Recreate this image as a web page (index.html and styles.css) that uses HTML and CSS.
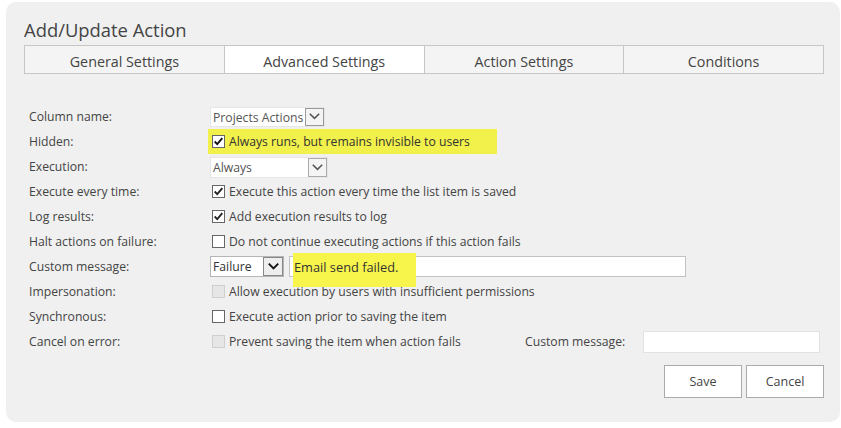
FILE: index.html
```html
<!DOCTYPE html>
<html>
<head>
<meta charset="utf-8">
<link rel="stylesheet" href="styles.css">
</head>
<body>
<div class="panel">
  <h1 class="title">Add/Update Action</h1>
  <div class="tabs">
    <div class="tab">General Settings</div>
    <div class="tab active">Advanced Settings</div>
    <div class="tab">Action Settings</div>
    <div class="tab">Conditions</div>
  </div>
  <div class="form">
    <div class="label">Column name:</div>
    <div class="ctrl">
      <span class="select sel-col"><span class="sel-text">Projects Actions</span><span class="arrow"><svg viewBox="0 0 18 18" width="17" height="17"><path d="M4 6 L9 11 L14 6" fill="none" stroke="#555" stroke-width="1.6"/></svg></span></span>
    </div>

    <div class="label">Hidden:</div>
    <div class="ctrl">
      <span class="hl hl-hidden"><span class="cb checked"><svg viewBox="0 0 13 13" width="11" height="11"><path d="M2 6.5 L5 9.5 L11 2.5" fill="none" stroke="#111" stroke-width="2.2"/></svg></span><span class="dark">Always runs, but remains invisible to users</span></span>
    </div>

    <div class="label">Execution:</div>
    <div class="ctrl">
      <span class="select sel-exec"><span class="sel-text">Always</span><span class="arrow"><svg viewBox="0 0 18 18" width="17" height="17"><path d="M4 6 L9 11 L14 6" fill="none" stroke="#555" stroke-width="1.6"/></svg></span></span>
    </div>

    <div class="label">Execute every time:</div>
    <div class="ctrl"><span class="cb checked"><svg viewBox="0 0 13 13" width="11" height="11"><path d="M2 6.5 L5 9.5 L11 2.5" fill="none" stroke="#222" stroke-width="2.2"/></svg></span>Execute this action every time the list item is saved</div>

    <div class="label">Log results:</div>
    <div class="ctrl"><span class="cb checked"><svg viewBox="0 0 13 13" width="11" height="11"><path d="M2 6.5 L5 9.5 L11 2.5" fill="none" stroke="#222" stroke-width="2.2"/></svg></span>Add execution results to log</div>

    <div class="label">Halt actions on failure:</div>
    <div class="ctrl"><span class="cb"></span>Do not continue executing actions if this action fails</div>

    <div class="label">Custom message:</div>
    <div class="ctrl msg-row">
      <span class="select sel-fail"><span class="sel-text">Failure</span><span class="arrow dark-arrow"><svg viewBox="0 0 18 18" width="17" height="17"><path d="M4 6 L9 11 L14 6" fill="none" stroke="#111" stroke-width="2"/></svg></span></span>
      <span class="input msg-input"><span class="hl-msg">Email send failed.</span></span>
    </div>

    <div class="label">Impersonation:</div>
    <div class="ctrl"><span class="cb disabled"></span>Allow execution by users with insufficient permissions</div>

    <div class="label">Synchronous:</div>
    <div class="ctrl"><span class="cb"></span>Execute action prior to saving the item</div>

    <div class="label">Cancel on error:</div>
    <div class="ctrl cancel-row">
      <span class="cancel-left"><span class="cb disabled"></span>Prevent saving the item when action fails</span>
      <span class="cm-label">Custom message:</span>
      <span class="input cm-input"></span>
    </div>
  </div>
  <div class="buttons">
    <button class="btn">Save</button>
    <button class="btn">Cancel</button>
  </div>
</div>
</body>
</html>
```

FILE: styles.css
```css
html, body {
  margin: 0;
  padding: 0;
  background: #ffffff;
}
body {
  font-family: "Open Sans", "Noto Sans", sans-serif;
  color: #444;
  width: 841px;
  height: 428px;
  overflow: hidden;
}
.panel {
  box-sizing: border-box;
  margin: 2px 0 0 6px;
  width: 834px;
  height: 420px;
  background: #f0f0f0;
  border-radius: 10px;
  padding: 14px 16px 0 18px;
}
.title {
  margin: 0;
  font-weight: normal;
  font-size: 18.4px;
  line-height: 27px;
  color: #444;
  height: 29px;
}
.tabs {
  display: flex;
  width: 800px;
  height: 29px;
  box-sizing: border-box;
  border: 1px solid #c6c6c6;
  background: #f4f4f4;
}
.tab {
  flex: 1;
  text-align: center;
  font-size: 14.3px;
  line-height: 27px;
  padding-top: 2px;
  color: #444;
  border-left: 1px solid #c6c6c6;
}
.tab:first-child { border-left: none; }
.tab.active { background: #ffffff; }
.form {
  display: grid;
  grid-template-columns: 181px 1fr;
  grid-auto-rows: 25px;
  margin-top: 30px;
  padding-left: 5px;
  font-size: 12.2px;
}
.label {
  display: flex;
  align-items: center;
  color: #444;
}
.ctrl {
  display: flex;
  align-items: center;
  color: #444;
  white-space: nowrap;
}
.cb {
  box-sizing: border-box;
  width: 13px;
  height: 13px;
  border: 1px solid #666;
  background: #fff;
  margin: 0 4px 0 2px;
  display: inline-flex;
  align-items: center;
  justify-content: center;
  flex: none;
}
.cb.disabled {
  border-color: #cfcfcf;
  background: #e6e6e6;
}
.select {
  display: inline-flex;
  align-items: stretch;
  background: #fff;
  box-sizing: border-box;
  height: 20px;
}
.sel-text {
  flex: 1;
  padding-left: 2px;
  line-height: 19px;
  color: #555;
}
.arrow {
  box-sizing: border-box;
  width: 19px;
  border: 1px solid #aaa;
  background: #f4f4f4;
  display: flex;
  align-items: center;
  justify-content: center;
}
.sel-col { width: 115px; height: 20px; border: 1px solid #e6e6e6; }
.sel-col .arrow { border-color: #9a9a9a; }
.sel-exec { width: 118px; height: 21px; border: 1px solid #e6e6e6; margin-top: 1px; }
.sel-fail { width: 74px; height: 21px; border: 1px solid #b5b5b5; }
.sel-fail .sel-text { color: #333; }
.dark-arrow { border-color: #888; background: #eee; width: 20px; }
.hl-hidden {
  display: inline-flex;
  align-items: center;
  background: #f2f04a;
  height: 25px;
  width: 289px;
  margin-left: -2px;
  padding-left: 2px;
  box-sizing: border-box;
}
.dark { color: #333; }
.msg-row { gap: 5px; }
.input {
  box-sizing: border-box;
  background: #fff;
  display: inline-block;
}
.msg-input {
  width: 397px;
  height: 21px;
  border: 1px solid #c2c2c2;
  position: relative;
}
.hl-msg {
  position: absolute;
  left: 3px;
  top: -4px;
  width: 123px;
  height: 34px;
  background: #f7f54c;
  color: #333;
  padding-left: 1px;
  line-height: 28px;
  box-sizing: border-box;
  font-size: 12.8px;
}
.cancel-left {
  display: inline-flex;
  align-items: center;
  width: 315px;
}
.cm-label {
  width: 118px;
}
.cm-input {
  width: 177px;
  height: 22px;
  border: 1px solid #e2e2e2;
}
.buttons {
  display: flex;
  justify-content: flex-end;
  gap: 4px;
  width: 800px;
  margin-top: 11px;
}
.btn {
  box-sizing: border-box;
  width: 78px;
  height: 33px;
  background: #fff;
  border: 1px solid #ababab;
  font-family: "Open Sans", "Noto Sans", sans-serif;
  font-size: 12.5px;
  color: #444;
  padding: 0;
}
```
